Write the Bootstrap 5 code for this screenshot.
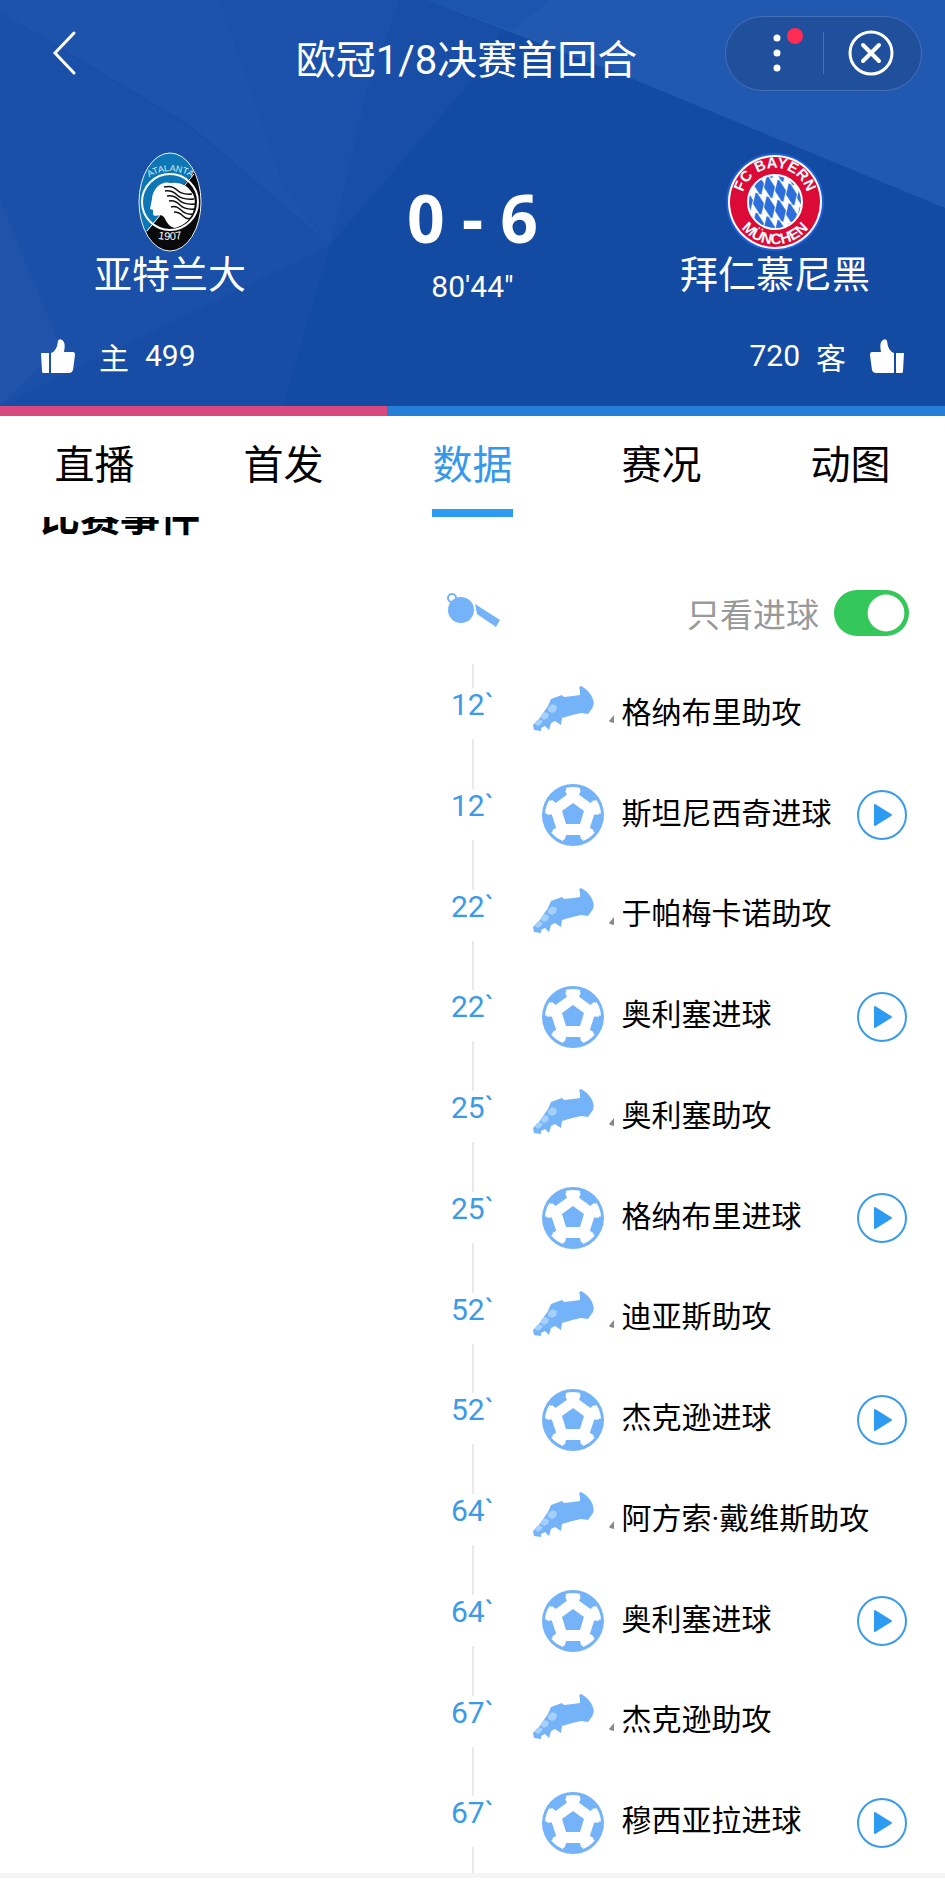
<!DOCTYPE html>
<html lang="zh-CN">
<head>
<meta charset="utf-8">
<meta name="viewport" content="width=device-width, initial-scale=1">
<title>欧冠1/8决赛首回合</title>
<link href="https://cdn.jsdelivr.net/npm/bootstrap@5.3.0/dist/css/bootstrap.min.css" rel="stylesheet">
<style>
  :root { --sky: #2e9bf3; --icon: #74b3f8; }
  body { font-family: "Noto Sans CJK SC", sans-serif; background: #fff; color: #000; }
  .num { font-family: Roboto, "Noto Sans CJK SC", sans-serif; font-size: 30px; line-height: 40px; }

  /* match header */
  .hero { background: #144ba2; color: #fff; isolation: isolate; }
  .hero-art { position: absolute; inset: 0; width: 100%; height: 100%; z-index: -1; }
  .topbar { display: grid; grid-template-columns: 1fr auto 1fr; height: 106px; padding: 0 23px 0 11px; }
  .topbar h1 { font-family: Roboto, "Noto Sans CJK SC", sans-serif; font-size: 40px; line-height: 48px; font-weight: 400; padding-top: 16px; }
  .back { margin-left: 31px; width: 44px; height: 48px; }
  .capsule { width: 197px; height: 75px; border: 1px solid #4670b4; border-radius: 38px; background: #204f9c; }
  .capsule .rule { width: 1px; height: 42px; background: #4670b4; }
  .teams { display: grid; grid-template-columns: 36% 1fr 36%; }
  .team { padding-top: 46px; }
  .team h2 { font-size: 38px; line-height: 40px; font-weight: 400; }
  .middle { padding-top: 71px; }
  .score { font-family: "Noto Sans", sans-serif; font-size: 66px; line-height: 80px; font-weight: 700; margin-bottom: 10px; }
  .cheer { padding: 24px 41px 25px; }
  .cheer .side-name { font-size: 30px; line-height: 50px; }
  .votes { height: 10px; border-radius: 0; background: #257fd9; }
  .votes .progress-bar { background: #d84a7f; }

  /* tabs */
  .tabs .nav-link { font-size: 40px; line-height: 60px; padding: 16px 0 0; color: #000; border-radius: 0; }
  .tabs .nav-link span { display: block; width: 81px; margin: 0 auto; padding-bottom: 17px; border-bottom: 8px solid transparent; }
  .tabs .nav-link.active { color: #3598ec; }
  .tabs .nav-link.active span { border-color: var(--sky); }

  /* event list */
  .events { overflow: hidden; border-bottom: 5px solid #f5f5f5; }
  .events h3 { font-size: 40px; line-height: 48px; font-weight: 700; margin: -27px 0 52px 40px; }
  .half-grid { display: grid; grid-template-columns: 1fr 60px 1fr; }
  .filter { height: 46px; margin-bottom: 28px; }
  .filter label { font-size: 33px; line-height: 46px; color: #999; }
  .filter .form-check-input { width: 75px; height: 46px; margin: 0 36px 0 15px; border: 0; border-radius: 23px; float: none; flex: none; }
  .filter .form-check-input:checked {
    background-color: #34c759;
    background-image: url("data:image/svg+xml,%3csvg xmlns='http://www.w3.org/2000/svg' viewBox='-4 -4 8 8'%3e%3ccircle r='3.2' fill='%23fff'/%3e%3c/svg%3e");
  }
  .timeline { display: grid; grid-template-rows: repeat(12, 1fr); height: 1209px; }
  .minute { display: flex; flex-direction: column; align-items: center; color: #3d9ae6; }
  .minute::before, .minute::after { content: ""; width: 2px; background: #e9e9e9; }
  .minute::before { height: 24px; }
  .minute::after { flex: 1; }
  .minute time { height: 51px; line-height: 33px; }
  .what { padding: 0 38px 0 28px; font-family: Roboto, "Noto Sans CJK SC", sans-serif; font-size: 30px; line-height: 46px; white-space: nowrap; }
  .what span { padding: 0 0 3px 1px; }
  .what svg { display: block; flex: none; }
  .play { margin-left: auto; width: 50px; height: 50px; }
</style>
</head>
<body>

<svg width="0" height="0" class="position-absolute" aria-hidden="true">
  <symbol id="boot" viewBox="0 0 90 64">
    <path fill="#74b3f8" d="M2 40 L8 34 L17 21 L20 14 L31 10 L33 12 L42 11 L49 10 L49 5 Q47 2 50 1 Q56 4 60 10 Q64 17 62 22 L57 29 L50 28 Q40 30 31 33 L30 40 L24 36 L20 38 L18 45 L14 41 L10 43 L10 46 L3 45 Z"/>
    <path fill="#a5d0fb" d="M17 23l4-4 5 2-1 5-4 2-4-2zM10 30l4-3 4 2-1 4-4 2-3-2zM5 36l3-2 4 2-2 3-3 2-3-2z"/>
    <path fill="#888" d="M78 36 L83 30 V38 L79 37Z"/>
  </symbol>
  <symbol id="ball" viewBox="0 0 90 64">
    <circle cx="42" cy="32" r="31" fill="#74b3f8"/>
    <circle cx="42" cy="32" r="28" fill="#fff"/>
    <g transform="translate(42 32)" fill="#74b3f8">
      <path id="patch" d="M-7 20H7L8 24L10 25L9 29H-9L-10 25L-8 24Z"/>
      <use href="#patch" transform="rotate(72)"/><use href="#patch" transform="rotate(144)"/>
      <use href="#patch" transform="rotate(216)"/><use href="#patch" transform="rotate(288)"/>
      <path d="M0-12 L11-4 L7 9 H-7 L-11-4Z"/>
    </g>
  </symbol>
  <symbol id="play" viewBox="0 0 50 50">
    <circle cx="25" cy="25" r="24" fill="none" stroke="#3a9bea" stroke-width="2"/>
    <path d="M18 15 L34 25 L18 35Z" fill="#2e9bf3" stroke="#2e9bf3" stroke-width="2" stroke-linejoin="round"/>
  </symbol>
  <symbol id="thumb" viewBox="0 0 34 34">
    <path fill="#fff" d="M0 14h8v20H2Q1 34 1 32ZM10 14Q16 12 17 2Q18-1 21 1Q25 3 23 13H32Q34 13 34 16L32 31Q31 34 28 34H10Z"/>
  </symbol>
</svg>

<header class="hero position-relative">
  <svg class="hero-art" viewBox="0 0 945 416" preserveAspectRatio="none" aria-hidden="true">
    <path fill="#184ea6" d="M0 0H520L472 80L330 245L280 416H0Z"/>
    <path fill="#1d53ab" d="M0 12V0H220L285 190L330 245L190 125Z"/>
    <path fill="#1b51aa" d="M220 0H400L370 80L330 245L285 190Z"/>
    <path fill="#1a50a8" d="M0 12L190 128L330 245L150 335L0 406Z"/>
    <path fill="#1f54aa" d="M0 200L60 345L0 406Z"/>
    <path fill="#174da4" d="M0 406L330 245L280 416H0Z"/>
    <path fill="#2158b0" d="M427 0H945V208L635 80Z"/>
    <path fill="#1d54ad" d="M427 0H550L512 30Z"/>
  </svg>

  <div class="topbar align-items-center">
    <button type="button" class="btn p-0 border-0 back d-flex align-items-center" aria-label="返回">
      <svg width="44" height="48" viewBox="0 0 44 48" fill="none" stroke="#fff" stroke-width="3" stroke-linecap="round"><path d="M32 4L13 24L32 44"/></svg>
    </button>
    <h1 class="m-0">欧冠1/8决赛首回合</h1>
    <div class="capsule d-flex align-items-center justify-content-between ms-auto">
      <button type="button" class="btn p-0 border-0 flex-fill" aria-label="更多">
        <svg class="d-block" width="97" height="60" viewBox="0 0 97 60"><g fill="#fff"><circle cx="51" cy="15" r="3.5"/><circle cx="51" cy="30" r="3.5"/><circle cx="51" cy="45" r="3.5"/></g><circle cx="69" cy="13" r="8" fill="#ff2c55"/></svg>
      </button>
      <span class="rule"></span>
      <button type="button" class="btn p-0 border-0 flex-fill" aria-label="关闭">
        <svg class="d-block" width="97" height="60" viewBox="0 0 97 60" fill="none" stroke="#fff" stroke-linecap="round"><circle cx="47" cy="30" r="21" stroke-width="3"/><path stroke-width="4" d="M39 22L55 38M55 22L39 38"/></svg>
      </button>
    </div>
  </div>

  <div class="teams text-center">
    <div class="team">
      <svg class="d-block mx-auto" width="64" height="100" viewBox="0 0 64 100" role="img" aria-label="Atalanta 1907">
        <defs>
          <clipPath id="oval"><ellipse cx="32" cy="50" rx="31" ry="49"/></clipPath>
          <path id="arcA" d="M8 29 Q14 20 32 19 Q50 20 57 29"/>
          <path id="arcB" d="M14 85 Q32 91 50 85"/>
        </defs>
        <g clip-path="url(#oval)">
          <path fill="#0d76b4" d="M0 0H64V100H0Z"/>
          <path fill="#0a0a0c" d="M64 10L4 86V100H64Z"/>
        </g>
        <path stroke="#fff" stroke-width="1" d="M56 22L9 79"/>
        <ellipse cx="32" cy="50" rx="31" ry="49" fill="none" stroke="#e8f1fa" stroke-width="1"/>
        <ellipse cx="32" cy="50" rx="28" ry="28" fill="none" stroke="#fff" stroke-width="2"/>
        <path fill="#fff" d="M19 35Q25 29 33 31Q47 29 55 42Q58 48 56 57Q52 72 37 76Q31 76 26 65L23 63Q15 65 15 62L15 58L12 57L14 47Q14 41 19 35Z"/>
        <path fill="none" stroke="#111" stroke-width="1.5" d="M26 35Q34 33 39 38T54 42M27 39Q34 38 39 43T56 47M29 44Q36 43 41 48T57 52M31 49Q37 48 42 53T57 57M33 55Q38 53 43 58T55 62M36 60Q41 60 45 64T53 66"/>
        <text font-family="Liberation Sans" font-size="9" fill="#dcecf8" text-anchor="middle"><textPath href="#arcA" startOffset="50%">ATALANTA</textPath></text>
        <text font-family="Liberation Sans" font-size="11" fill="#fff" text-anchor="middle"><textPath href="#arcB" startOffset="50%">1907</textPath></text>
      </svg>
      <h2 class="m-0">亚特兰大</h2>
    </div>
    <div class="middle">
      <div class="score">0 - 6</div>
      <div class="num">80'44"</div>
    </div>
    <div class="team">
      <svg class="d-block mx-auto" width="100" height="100" viewBox="0 0 100 100" role="img" aria-label="FC Bayern München">
        <defs>
          <pattern id="lozenge" width="11" height="20" patternUnits="userSpaceOnUse" patternTransform="translate(50 47) skewY(18)">
            <path fill="#fff" d="M0 0H11V20H0Z"/><path fill="#2c6fdc" d="M3 -2L11 8L8 22L0 12Z"/>
          </pattern>
          <path id="arcC" d="M18 57A33 33 0 1 1 82 57"/>
          <path id="arcD" d="M8 40A43 43 0 1 0 92 40"/>
        </defs>
        <circle cx="50" cy="50" r="49" fill="#1f5fd8"/>
        <circle cx="50" cy="50" r="47" fill="#fff"/>
        <circle cx="50" cy="50" r="45" fill="#dc0a37"/>
        <circle cx="50" cy="50" r="27" fill="url(#lozenge)" stroke="#fff" stroke-width="2"/>
        <g font-family="Liberation Sans" font-weight="700" font-size="15" fill="#fff" text-anchor="middle">
          <text><textPath href="#arcC" startOffset="50%">FC BAYERN</textPath></text>
          <text><textPath href="#arcD" startOffset="50%">MÜNCHEN</textPath></text>
        </g>
      </svg>
      <h2 class="m-0">拜仁慕尼黑</h2>
    </div>
  </div>

  <div class="cheer d-flex justify-content-between">
    <div class="d-flex align-items-center">
      <button type="button" class="btn p-0 border-0 d-flex me-4" aria-label="支持主队"><svg width="34" height="34"><use href="#thumb"/></svg></button>
      <span class="side-name me-3">主</span><span class="num">499</span>
    </div>
    <div class="d-flex align-items-center">
      <span class="num me-3">720</span><span class="side-name me-4">客</span>
      <button type="button" class="btn p-0 border-0 d-flex" aria-label="支持客队"><svg width="34" height="34" viewBox="0 0 34 34"><use href="#thumb" width="34" height="34" transform="matrix(-1 0 0 1 34 0)"/></svg></button>
    </div>
  </div>
  <div class="progress votes"><div class="progress-bar" style="width:40.9%"></div></div>
</header>

<nav class="nav nav-fill tabs flex-nowrap position-relative bg-white">
  <a class="nav-link col" href="#live"><span>直播</span></a>
  <a class="nav-link col" href="#lineup"><span>首发</span></a>
  <a class="nav-link col active" href="#data" aria-current="page"><span>数据</span></a>
  <a class="nav-link col" href="#report"><span>赛况</span></a>
  <a class="nav-link col" href="#gif"><span>动图</span></a>
</nav>

<main class="events" id="data">
  <h3>比赛事件</h3>
  <div class="half-grid filter">
    <span></span>
    <svg class="mx-auto" width="54" height="46" viewBox="0 0 54 46" aria-hidden="true">
      <circle cx="6" cy="8" r="4" fill="none" stroke="#74b3f8" stroke-width="2"/>
      <circle cx="15" cy="20" r="13" fill="#74b3f8"/>
      <path fill="#74b3f8" d="M29 14L54 30L50 37L31 24Z"/>
    </svg>
    <div class="form-switch d-flex align-items-center justify-content-end p-0">
      <label for="goalsOnly">只看进球</label>
      <input class="form-check-input" type="checkbox" role="switch" id="goalsOnly" checked>
    </div>
  </div>

  <div class="timeline">
    <div class="half-grid"><span></span><div class="minute"><time class="num">12`</time></div>
      <div class="what d-flex align-items-center"><svg width="90" height="64"><use href="#boot" y="3"/></svg><span>格纳布里助攻</span></div></div>
    <div class="half-grid"><span></span><div class="minute"><time class="num">12`</time></div>
      <div class="what d-flex align-items-center"><svg width="90" height="64"><use href="#ball"/></svg><span>斯坦尼西奇进球</span><button type="button" class="btn p-0 border-0 play" aria-label="播放"><svg width="50" height="50"><use href="#play"/></svg></button></div></div>
    <div class="half-grid"><span></span><div class="minute"><time class="num">22`</time></div>
      <div class="what d-flex align-items-center"><svg width="90" height="64"><use href="#boot" y="3"/></svg><span>于帕梅卡诺助攻</span></div></div>
    <div class="half-grid"><span></span><div class="minute"><time class="num">22`</time></div>
      <div class="what d-flex align-items-center"><svg width="90" height="64"><use href="#ball"/></svg><span>奥利塞进球</span><button type="button" class="btn p-0 border-0 play" aria-label="播放"><svg width="50" height="50"><use href="#play"/></svg></button></div></div>
    <div class="half-grid"><span></span><div class="minute"><time class="num">25`</time></div>
      <div class="what d-flex align-items-center"><svg width="90" height="64"><use href="#boot" y="3"/></svg><span>奥利塞助攻</span></div></div>
    <div class="half-grid"><span></span><div class="minute"><time class="num">25`</time></div>
      <div class="what d-flex align-items-center"><svg width="90" height="64"><use href="#ball"/></svg><span>格纳布里进球</span><button type="button" class="btn p-0 border-0 play" aria-label="播放"><svg width="50" height="50"><use href="#play"/></svg></button></div></div>
    <div class="half-grid"><span></span><div class="minute"><time class="num">52`</time></div>
      <div class="what d-flex align-items-center"><svg width="90" height="64"><use href="#boot" y="3"/></svg><span>迪亚斯助攻</span></div></div>
    <div class="half-grid"><span></span><div class="minute"><time class="num">52`</time></div>
      <div class="what d-flex align-items-center"><svg width="90" height="64"><use href="#ball"/></svg><span>杰克逊进球</span><button type="button" class="btn p-0 border-0 play" aria-label="播放"><svg width="50" height="50"><use href="#play"/></svg></button></div></div>
    <div class="half-grid"><span></span><div class="minute"><time class="num">64`</time></div>
      <div class="what d-flex align-items-center"><svg width="90" height="64"><use href="#boot" y="3"/></svg><span>阿方索·戴维斯助攻</span></div></div>
    <div class="half-grid"><span></span><div class="minute"><time class="num">64`</time></div>
      <div class="what d-flex align-items-center"><svg width="90" height="64"><use href="#ball"/></svg><span>奥利塞进球</span><button type="button" class="btn p-0 border-0 play" aria-label="播放"><svg width="50" height="50"><use href="#play"/></svg></button></div></div>
    <div class="half-grid"><span></span><div class="minute"><time class="num">67`</time></div>
      <div class="what d-flex align-items-center"><svg width="90" height="64"><use href="#boot" y="3"/></svg><span>杰克逊助攻</span></div></div>
    <div class="half-grid"><span></span><div class="minute"><time class="num">67`</time></div>
      <div class="what d-flex align-items-center"><svg width="90" height="64"><use href="#ball"/></svg><span>穆西亚拉进球</span><button type="button" class="btn p-0 border-0 play" aria-label="播放"><svg width="50" height="50"><use href="#play"/></svg></button></div></div>
  </div>
</main>

<script src="https://cdn.jsdelivr.net/npm/bootstrap@5.3.0/dist/js/bootstrap.bundle.min.js"></script>
</body>
</html>
